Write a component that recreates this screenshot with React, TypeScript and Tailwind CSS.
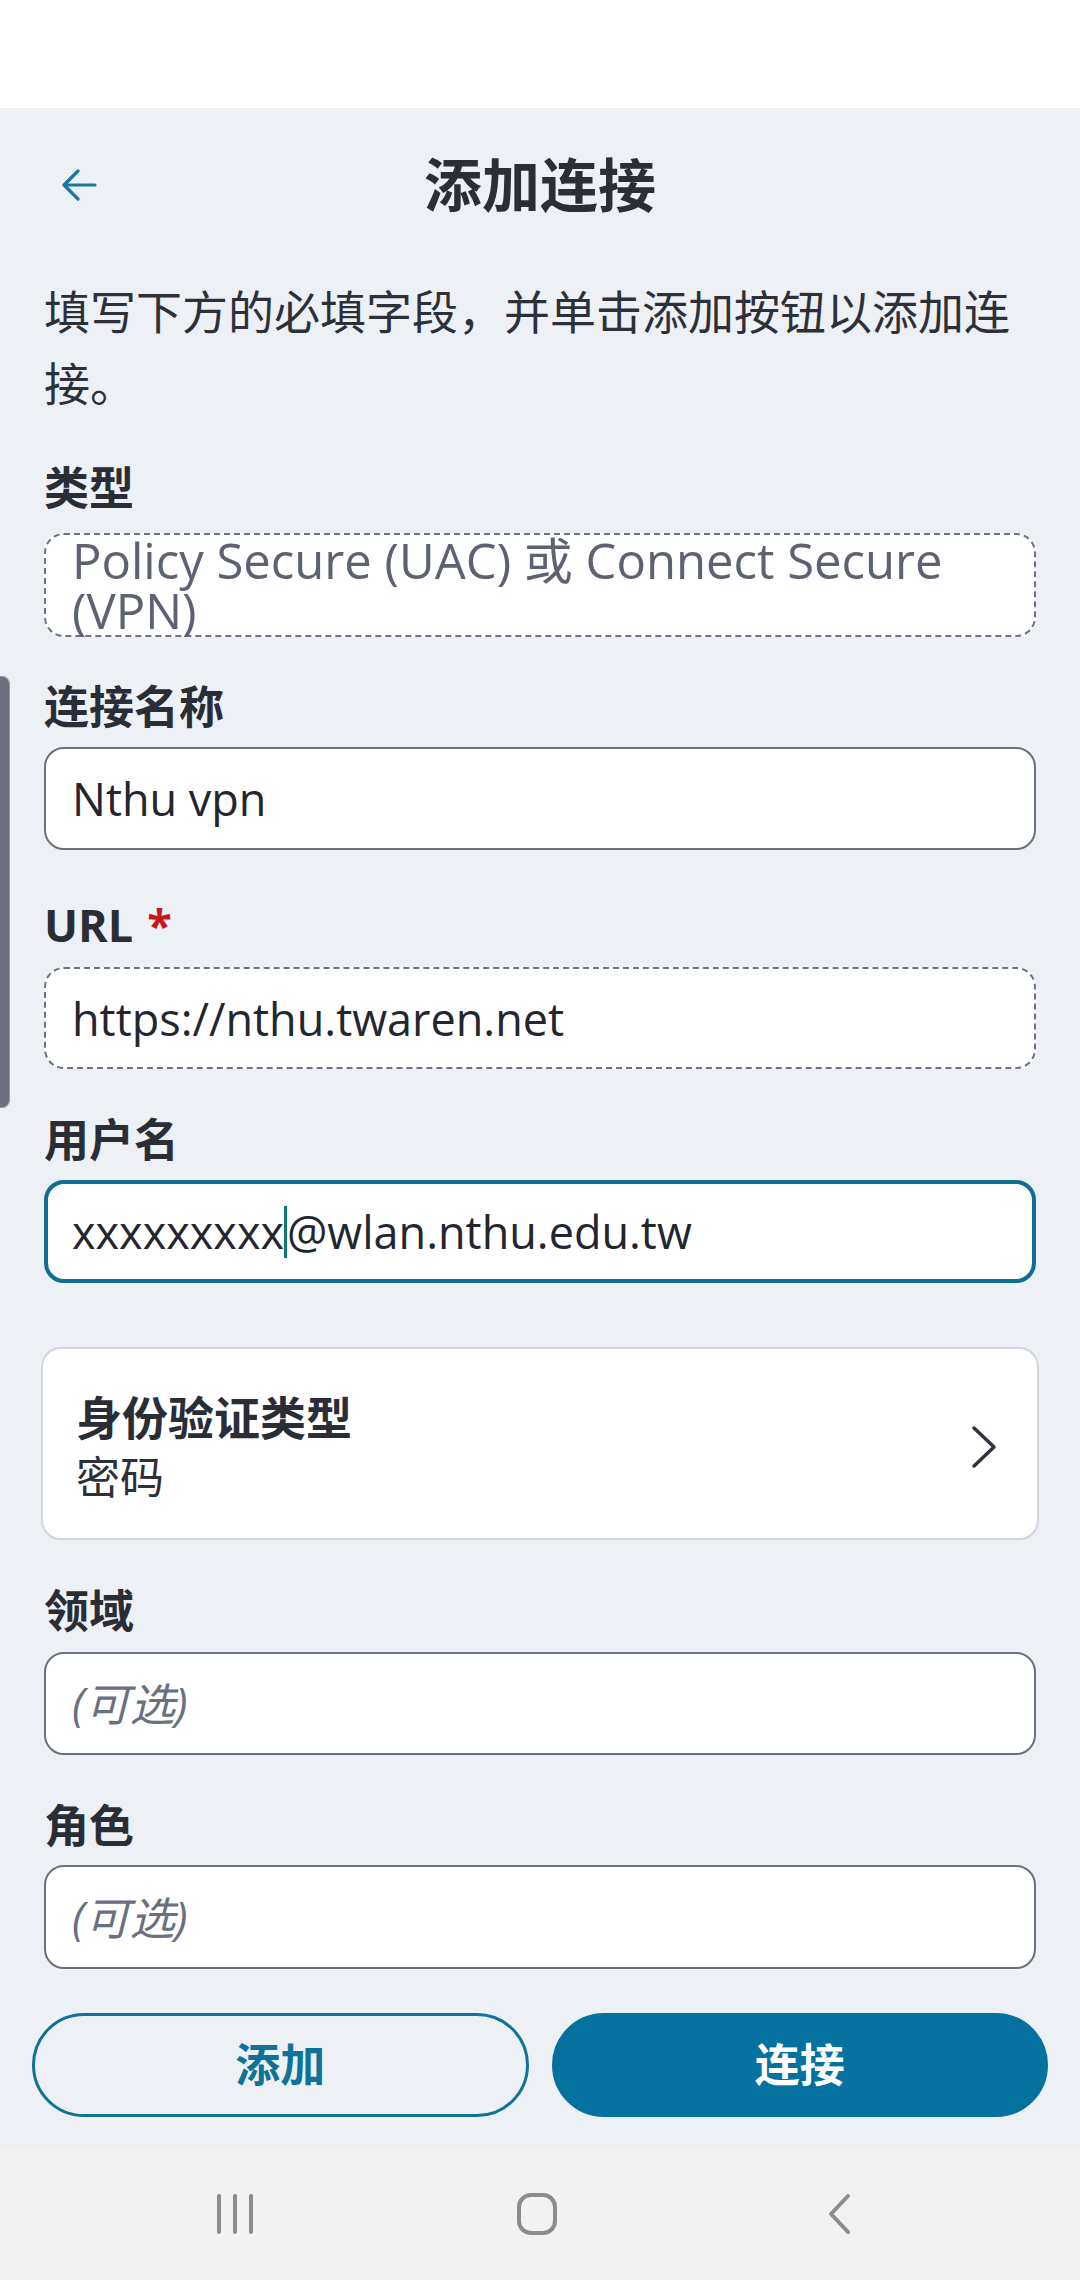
import type { ReactNode } from "react";

function Label({ children, className = "" }: { children: ReactNode; className?: string }) {
  return <div className={`text-[45px] font-bold leading-[56px] text-[#2a2d35] ${className}`}>{children}</div>;
}

type Tone = "solid" | "dashed" | "focus";

const toneClass: Record<Tone, string> = {
  solid: "border-2 border-solid border-[#6a707c] px-[26px]",
  dashed: "border-2 border-dashed border-[#6b7280] px-[26px]",
  focus: "border-[4px] border-solid border-[#0e6f93] px-[24px]",
};

function Field({
  children,
  placeholder,
  tone = "solid",
  className = "",
}: {
  children?: ReactNode;
  placeholder?: string;
  tone?: Tone;
  className?: string;
}) {
  return (
    <div
      className={`flex items-center rounded-[20px] bg-white text-[45px] leading-none text-[#23262e] ${toneClass[tone]} ${className}`}
    >
      {children ?? <span className="italic text-[#6b7080]">{placeholder}</span>}
    </div>
  );
}

export default function App() {
  return (
    <div className="relative flex min-h-[2280px] w-[1080px] flex-col bg-[#edf1f5] font-['Open_Sans','Noto_Sans_CJK_SC',sans-serif] text-[#2a2d35]">
      <div className="h-[108px] bg-white" />

      <header className="grid h-[154px] grid-cols-[1fr_auto_1fr] items-center">
        <button type="button" aria-label="返回" className="ml-[61px] justify-self-start">
          <svg width="36" height="32" viewBox="0 0 36 32" fill="none" stroke="#1a779f" strokeWidth="3.2" strokeLinecap="round" strokeLinejoin="round">
            <path d="M34 16H3M17 2L3 16L17 30" />
          </svg>
        </button>
        <h1 className="text-[58px] font-bold leading-none text-[#2b2e36]">添加连接</h1>
        <div />
      </header>

      <main className="flex flex-col px-[44px]">
        <p className="mt-[13px] text-[46px] leading-[72px] text-[#2d3039]">
          填写下方的必填字段，并单击添加按钮以添加连接。
        </p>

        <Label className="mt-[41px]">类型</Label>
        <div className="mt-[17px] h-[104px] rounded-[20px] border-2 border-dashed border-[#6b7280] bg-white px-[26px] text-[49px] leading-[50px] text-[#5c6272]">
          Policy Secure (UAC) 或 Connect Secure (VPN)
        </div>

        <Label className="mt-[42px]">连接名称</Label>
        <Field className="mt-[12px] h-[103px]">Nthu vpn</Field>

        <Label className="mt-[47px]">
          URL<span className="ml-[14px] text-[#c8161d]">*</span>
        </Label>
        <Field tone="dashed" className="mt-[14px] h-[102px]">
          https://nthu.twaren.net
        </Field>

        <Label className="mt-[43px]">用户名</Label>
        <Field tone="focus" className="mt-[12px] h-[103px]">
          xxxxxxxxx
          <span className="inline-block h-[52px] w-[3px] bg-[#0d7a72]" />
          @wlan.nthu.edu.tw
        </Field>

        <div className="mx-[-3px] mt-[64px] flex h-[193px] justify-between rounded-[20px] border-2 border-[#d3d7dd] bg-white pl-[33px] pr-[40px] pt-[40px]">
          <div>
            <div className="text-[46px] font-bold leading-[56px] text-[#2a2d35]">身份验证类型</div>
            <div className="text-[44px] leading-[64px] text-[#2d3039]">密码</div>
          </div>
          <svg className="mt-[36px]" width="26" height="44" viewBox="0 0 26 44" fill="none" stroke="#2f333b" strokeWidth="3.5" strokeLinecap="round" strokeLinejoin="round">
            <path d="M3 3L23 22L3 41" />
          </svg>
        </div>

        <Label className="mt-[43px]">领域</Label>
        <Field className="mt-[13px] h-[103px]" placeholder="(可选)" />

        <Label className="mt-[43px]">角色</Label>
        <Field className="mt-[11px] h-[104px]" placeholder="(可选)" />
      </main>

      <div className="mt-[44px] grid grid-cols-2 gap-[23px] px-[32px]">
        <button type="button" className="h-[104px] rounded-full border-[3px] border-[#0e7299] text-[45px] font-bold text-[#0e7299]">
          添加
        </button>
        <button type="button" className="h-[104px] rounded-full border-[3px] border-[#04719e] bg-[#04719e] text-[45px] font-bold text-white">
          连接
        </button>
      </div>

      <div className="flex-1" />

      <nav className="flex h-[132px] items-center justify-center bg-[#f2f2f2] pr-[6px]">
        <div className="flex w-[302px] justify-center">
          <svg width="38" height="42" viewBox="0 0 38 42" fill="none" stroke="#8c8c8c" strokeWidth="4" strokeLinecap="round">
            <path d="M3 3V39M19 3V39M35 3V39" />
          </svg>
        </div>
        <div className="flex w-[302px] justify-center">
          <svg width="42" height="44" viewBox="0 0 42 44" fill="none" stroke="#8c8c8c" strokeWidth="4">
            <rect x="3" y="3" width="36" height="38" rx="12" />
          </svg>
        </div>
        <div className="flex w-[302px] justify-center">
          <svg width="26" height="42" viewBox="0 0 26 42" fill="none" stroke="#8c8c8c" strokeWidth="4" strokeLinecap="round" strokeLinejoin="round">
            <path d="M22 3L5 21L22 39" />
          </svg>
        </div>
      </nav>

      <div className="absolute left-0 top-[676px] h-[432px] w-[10px] rounded-r-[8px] border border-l-0 border-[#9a9aa6] bg-[#6f6f7e]" />
    </div>
  );
}
